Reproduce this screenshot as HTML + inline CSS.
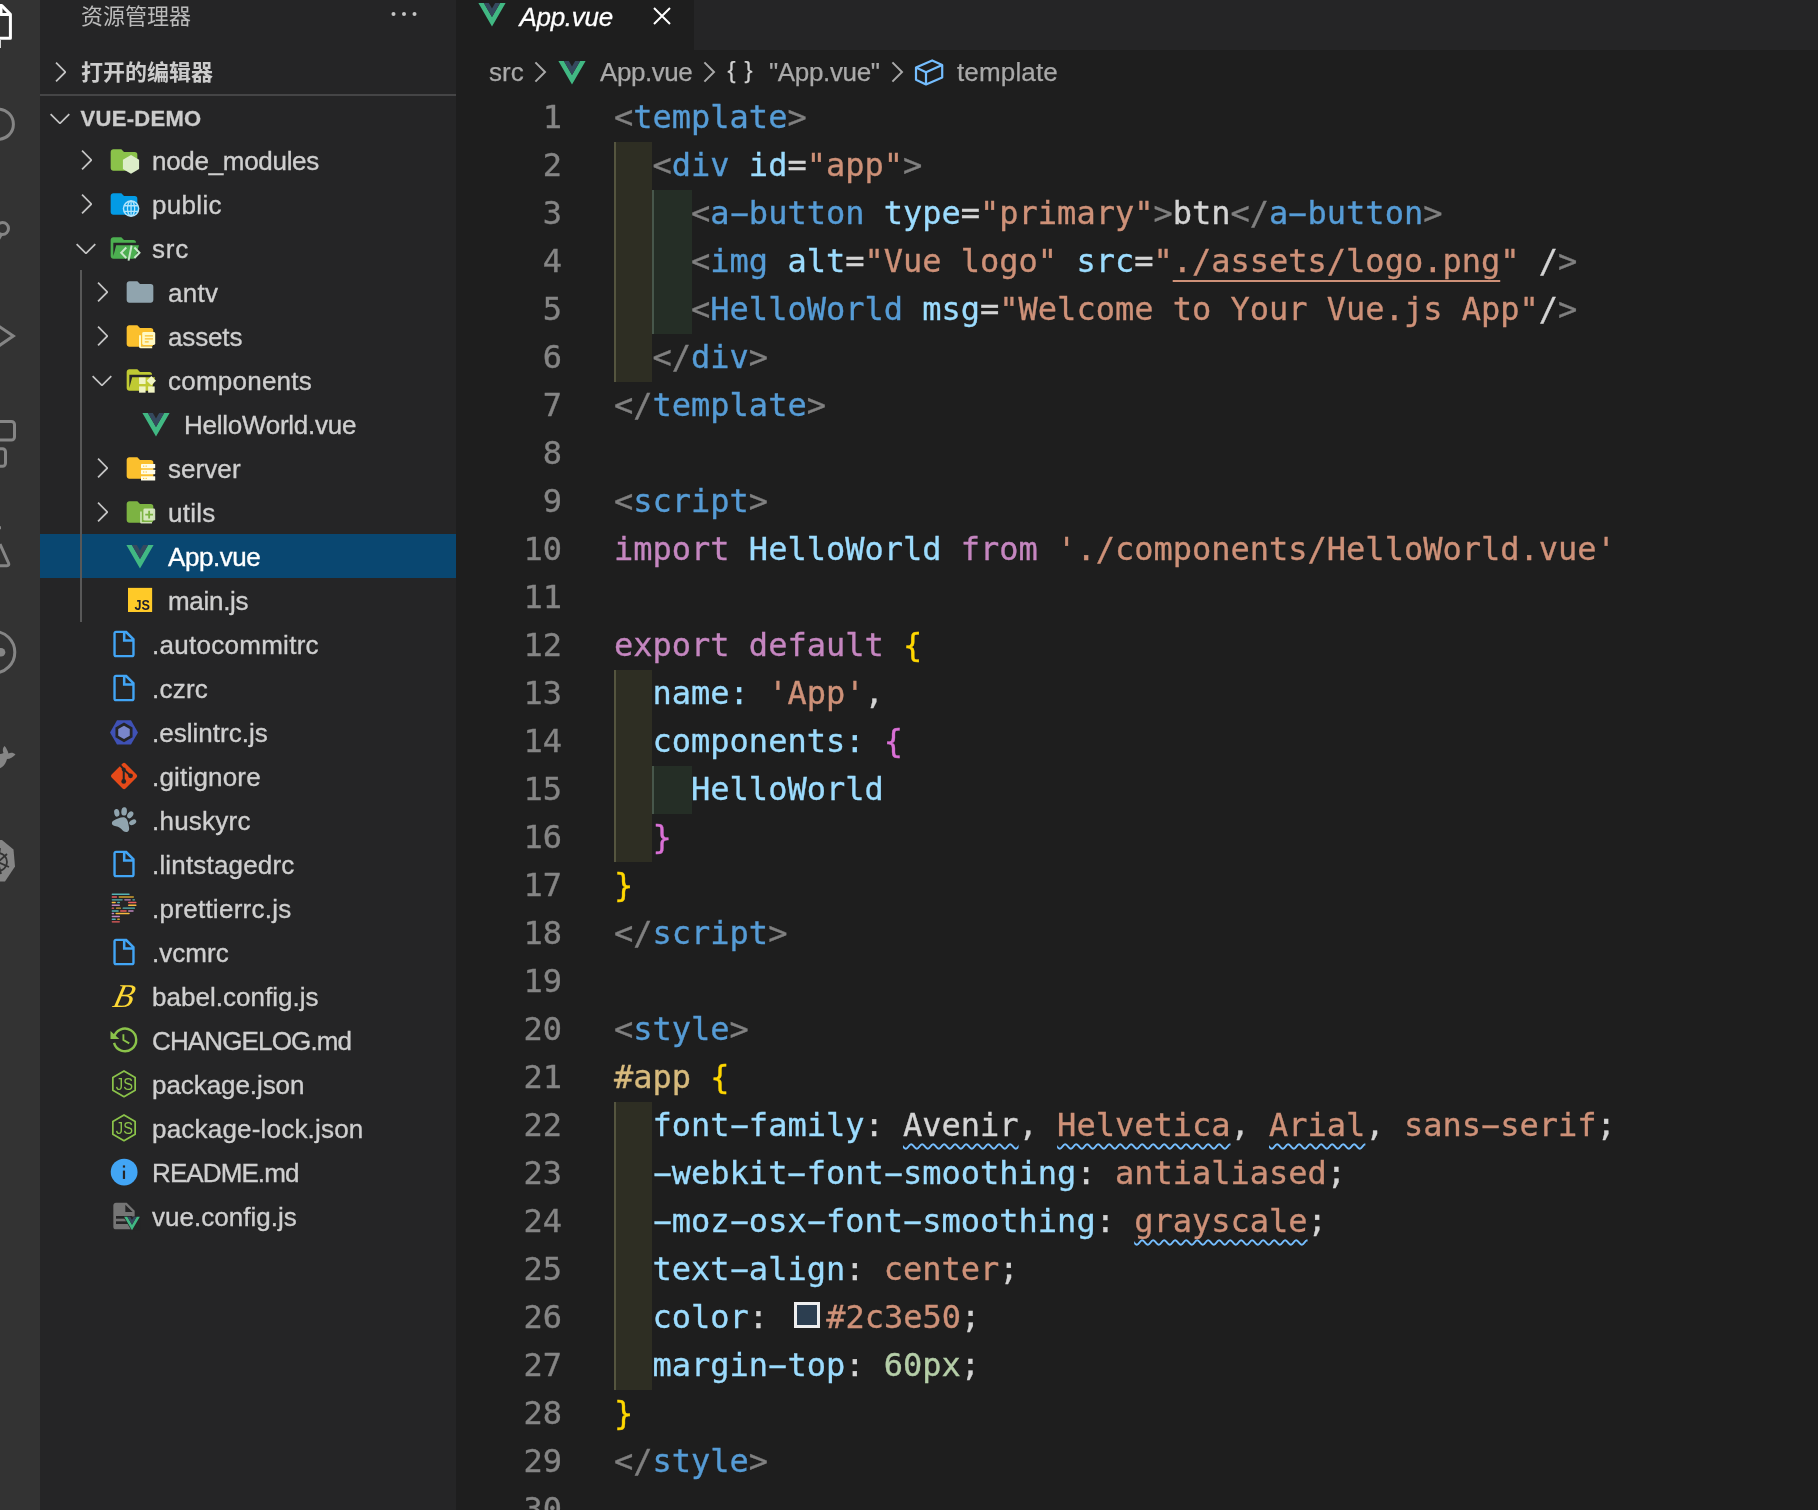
<!DOCTYPE html>
<html lang="zh-CN"><head><meta charset="utf-8"><title>App.vue - vue-demo</title>
<style>
*{box-sizing:border-box;margin:0;padding:0}
html,body{width:1818px;height:1510px;overflow:hidden;background:#1e1e1e}
body{position:relative;font-family:"Liberation Sans", "Noto Sans CJK SC", sans-serif;font-size:26px;color:#cccccc;-webkit-font-smoothing:antialiased}
#act{position:absolute;left:0;top:0;width:40px;height:1510px;background:#333333;overflow:hidden}
#side{position:absolute;left:40px;top:0;width:416px;height:1510px;background:#252526;overflow:hidden}
#ed{position:absolute;left:456px;top:0;width:1362px;height:1510px;background:#1e1e1e;overflow:hidden}
#tabs{position:absolute;left:0;top:0;width:1362px;height:50px;background:#252526}
#tab{position:absolute;left:0;top:0;width:238px;height:50px;background:#1e1e1e}
.abs{position:absolute}
.row{position:absolute;left:0;width:416px;height:44px}
.row.sel{background:#094771}
.row.sel .lb{color:#ffffff}
.row span{position:absolute;display:block}
.tw{top:6px;width:32px;height:32px}
.ic{top:6px;width:32px;height:32px}
.lb{top:1px;line-height:44px;white-space:pre;color:#cfcfcf;-webkit-text-stroke:0.35px}
svg{display:block;overflow:visible}
.ln{position:absolute;left:0;margin-top:-1px;-webkit-text-stroke:0.35px;width:106px;text-align:right;font-family:"DejaVu Sans Mono", "Liberation Mono", monospace;font-size:32px;line-height:48px;height:48px;color:#858585}
.cl{position:absolute;left:158px;margin-top:-1px;-webkit-text-stroke:0.35px;font-family:"DejaVu Sans Mono", "Liberation Mono", monospace;font-size:32px;line-height:48px;height:48px;white-space:pre;color:#d4d4d4}
.g{color:#808080}.t{color:#569cd6}.a{color:#9cdcfe}.s{color:#ce9178}.d{color:#d4d4d4}
.k{color:#c586c0}.y{color:#ffd700}.m{color:#da70d6}.c{color:#d7ba7d}.n{color:#b5cea8}
.u{text-decoration:underline;text-decoration-thickness:1.5px;text-underline-offset:8px;text-decoration-skip-ink:none}
.w{text-decoration:underline wavy #75beff;text-decoration-thickness:1.5px;text-underline-offset:7px;text-decoration-skip-ink:none}
.sw{display:inline-block;width:26px;height:26px;border:3px solid #eeeeee;background:#2c3e50;vertical-align:0px;margin-right:6.2px;margin-left:6.6px}
.r1{position:absolute;background:#2e2e23;border-left:2px solid #55553f}
.r2{position:absolute;background:#252e26;border-left:2px solid #47574b}
.h{display:inline-block;transform:scaleX(1.9) translateY(-0.5px)}
.gl{position:absolute;left:0;top:0;width:100%;height:100%;will-change:transform;background:transparent}
.bc{position:absolute;top:50px;height:44px;line-height:44px;color:#a9a9a9;white-space:pre;-webkit-text-stroke:0.25px}
</style></head>
<body>
<div id="act"><svg width="40" height="1510" viewBox="0 0 40 1510">
<g fill="none" stroke="#ffffff" stroke-width="3" stroke-linejoin="round">
<path d="M-6 5.600H1.800L10.400 14.400V38.200H-6"/>
<path d="M1 5.600V14.400H10.400"/>
</g>
<rect x="0" y="40" width="1" height="8" fill="#d8d8d8"/>
<g fill="none" stroke="#858585" stroke-width="3">
<circle cx="-1.700" cy="124.200" r="15.100"/>
<circle cx="2.500" cy="228.500" r="6"/>
<path d="M1.500 234l-4 7"/>
<path d="M-2 325.700l15.300 10.400-15.300 10.400" stroke-linejoin="miter"/>
<rect x="-10" y="421.500" width="24.500" height="18.500" rx="3"/>
<rect x="-12" y="448.800" width="17.500" height="17.500" rx="3"/>
<path d="M-1 527.800h2"/>
<path d="M0 544l8.500 19c.7 1.700 0 2.700-1.500 2.700h-10"/>
<circle cx="-6" cy="652.200" r="20.800"/>
</g>
<circle cx="1" cy="652.200" r="4.300" fill="#858585"/>
<path d="M-2 769c6-2 8-6 9-10 3 0 6-2 8.500-4.500-2-2-5-2-7-1-1-3-2-5.500-4-7.500-2 2-2 5-1 7-2 1-4 1-6 1z" fill="#858585"/>
<path d="M-8 840h10l11.500 9.500 1.500 17-10 15h-14z" fill="#858585"/>
<g stroke="#333333" stroke-width="1.800" fill="none"><path d="M-2 862l9-8M-2 862l11 5M-2 862l3 12M-2 862l2-14"/><circle cx="-2" cy="862" r="9"/></g>
</svg>
</div>
<div id="side">
<div class="gl">
<div class="abs" style="left:41px;top:-5px;line-height:44px;font-size:22px;color:#bbbbbb;white-space:pre">资源管理器</div>
<svg class="abs" style="left:350px;top:8px" width="30" height="12" viewBox="0 0 30 12"><g fill="#c5c5c5"><circle cx="3.500" cy="6" r="2"/><circle cx="14" cy="6" r="2"/><circle cx="24.500" cy="6" r="2"/></g></svg>
<span class="abs" style="left:4px;top:56px"><svg width="32" height="32" viewBox="0 0 16 16"><path d="M10.072 8.024L5.715 3.667l.618-.62L11 7.716v.618L6.333 13l-.618-.619 4.357-4.357z" fill="#c5c5c5"/></svg></span>
<div class="abs" style="left:41px;top:51px;line-height:44px;font-size:22px;font-weight:bold;color:#cccccc;white-space:pre">打开的编辑器</div>
<div class="abs" style="left:0;top:94px;width:416px;height:2px;background:#454546"></div>
<span class="abs" style="left:4px;top:102px"><svg width="32" height="32" viewBox="0 0 16 16"><path d="M7.976 10.072l4.357-4.357.62.618L8.284 11h-.618L3 6.333l.619-.618 4.357 4.357z" fill="#c5c5c5"/></svg></span>
<div class="abs" style="left:40.500px;top:97px;line-height:44px;font-size:22px;font-weight:bold;color:#cccccc;white-space:pre;letter-spacing:0.3px;-webkit-text-stroke:0.3px">VUE-DEMO</div>

<div class="row" style="top:138px">
<span class="tw" style="left:30px"><svg width="32" height="32" viewBox="0 0 16 16"><path d="M10.072 8.024L5.715 3.667l.618-.62L11 7.716v.618L6.333 13l-.618-.619 4.357-4.357z" fill="#c5c5c5"/></svg></span>
<span class="ic" style="left:68px"><svg width="32" height="32" viewBox="0 0 24 24"><path d="M10 4H4c-1.11 0-2 .89-2 2v12c0 1.1.9 2 2 2h16c1.1 0 2-.9 2-2V8a2 2 0 0 0-2-2h-8l-2-2z" fill="#8bc34a"/><path d="M17.250 8.300l6.060 3.500v7l-6.060 3.500-6.060-3.500v-7z" fill="#dcedc8"/></svg></span>
<span class="lb" style="left:112px;letter-spacing:-0.3px">node_modules</span>
</div>
<div class="row" style="top:182px">
<span class="tw" style="left:30px"><svg width="32" height="32" viewBox="0 0 16 16"><path d="M10.072 8.024L5.715 3.667l.618-.62L11 7.716v.618L6.333 13l-.618-.619 4.357-4.357z" fill="#c5c5c5"/></svg></span>
<span class="ic" style="left:68px"><svg width="32" height="32" viewBox="0 0 24 24"><path d="M10 4H4c-1.11 0-2 .89-2 2v12c0 1.1.9 2 2 2h16c1.1 0 2-.9 2-2V8a2 2 0 0 0-2-2h-8l-2-2z" fill="#039be5"/><circle cx="17.300" cy="15.400" r="5.700" fill="#039be5" stroke="#b3e5fc" stroke-width="1.100"/><g fill="none" stroke="#b3e5fc" stroke-width="1"><ellipse cx="17.300" cy="15.400" rx="2.700" ry="5.700"/><path d="M12.100 13.300h10.400M12.100 17.500h10.400M17.300 9.700v11.400"/></g></svg></span>
<span class="lb" style="left:112px;letter-spacing:0.32px">public</span>
</div>
<div class="row" style="top:226px">
<span class="tw" style="left:30px"><svg width="32" height="32" viewBox="0 0 16 16"><path d="M7.976 10.072l4.357-4.357.62.618L8.284 11h-.618L3 6.333l.619-.618 4.357 4.357z" fill="#c5c5c5"/></svg></span>
<span class="ic" style="left:68px"><svg width="32" height="32" viewBox="0 0 24 24"><path d="M19 20H4c-1.11 0-2-.9-2-2V6c0-1.11.89-2 2-2h6l2 2h7a2 2 0 0 1 2 2H4v10l2.14-8h17.07l-2.28 8.5c-.23.87-1.01 1.5-1.93 1.5z" fill="#4caf50"/><g fill="none" stroke="#c8e6c9" stroke-width="1.500"><path d="M13.700 11.600l-3.800 3.950 3.800 3.950M19.800 11.600l3.800 3.950-3.800 3.950M17.700 10.100l-2.300 11.400"/></g></svg></span>
<span class="lb" style="left:112px;letter-spacing:0.75px">src</span>
</div>
<div class="row" style="top:270px">
<span class="tw" style="left:46px"><svg width="32" height="32" viewBox="0 0 16 16"><path d="M10.072 8.024L5.715 3.667l.618-.62L11 7.716v.618L6.333 13l-.618-.619 4.357-4.357z" fill="#c5c5c5"/></svg></span>
<span class="ic" style="left:84px"><svg width="32" height="32" viewBox="0 0 24 24"><path d="M10 4H4c-1.11 0-2 .89-2 2v12c0 1.1.9 2 2 2h16c1.1 0 2-.9 2-2V8a2 2 0 0 0-2-2h-8l-2-2z" fill="#90a4ae"/></svg></span>
<span class="lb" style="left:128px;letter-spacing:0.3px">antv</span>
</div>
<div class="row" style="top:314px">
<span class="tw" style="left:46px"><svg width="32" height="32" viewBox="0 0 16 16"><path d="M10.072 8.024L5.715 3.667l.618-.62L11 7.716v.618L6.333 13l-.618-.619 4.357-4.357z" fill="#c5c5c5"/></svg></span>
<span class="ic" style="left:84px"><svg width="32" height="32" viewBox="0 0 24 24"><path d="M10 4H4c-1.11 0-2 .89-2 2v12c0 1.1.9 2 2 2h16c1.1 0 2-.9 2-2V8a2 2 0 0 0-2-2h-8l-2-2z" fill="#fbc02d"/><path d="M11.250 11.400h1.500v8.400h8.400v1.350h-8.700c-.7 0-1.200-.5-1.200-1.200z" fill="#fff9c4"/><rect x="13.650" y="9" width="9.750" height="9.800" rx="1.100" fill="#fff9c4"/><path d="M15.600 11.900h6.150M15.600 14.150h6.150M15.600 16.400h2.900" stroke="#fbc02d" stroke-width="1.050"/></svg></span>
<span class="lb" style="left:128px;letter-spacing:-0.14px">assets</span>
</div>
<div class="row" style="top:358px">
<span class="tw" style="left:46px"><svg width="32" height="32" viewBox="0 0 16 16"><path d="M7.976 10.072l4.357-4.357.62.618L8.284 11h-.618L3 6.333l.619-.618 4.357 4.357z" fill="#c5c5c5"/></svg></span>
<span class="ic" style="left:84px"><svg width="32" height="32" viewBox="0 0 24 24"><path d="M19 20H4c-1.11 0-2-.9-2-2V6c0-1.11.89-2 2-2h6l2 2h7a2 2 0 0 1 2 2H4v10l2.14-8h17.07l-2.28 8.5c-.23.87-1.01 1.5-1.93 1.5z" fill="#c0ca33"/><g fill="#f0f4c3"><rect x="11.300" y="10.100" width="4.900" height="4.900"/><rect x="11.300" y="16.800" width="4.900" height="4.700"/><rect x="18.100" y="16.800" width="4.900" height="4.700"/><path d="M20.500 9l3.500 3.500-3.500 3.500-3.500-3.500z"/></g></svg></span>
<span class="lb" style="left:128px;letter-spacing:0.23px">components</span>
</div>
<div class="row" style="top:402px">
<span class="ic" style="left:100px"><svg width="32" height="32" viewBox="0 0 24 24"><path d="M1.800 3.700L12 21.300 22.200 3.700h-4.100L12 14.250 5.900 3.700z" fill="#41b883"/><path d="M5.900 3.700L12 14.250 18.100 3.700h-3.740L12 7.800 9.640 3.700z" fill="#35495e"/></svg></span>
<span class="lb" style="left:144px;letter-spacing:-0.26px">HelloWorld.vue</span>
</div>
<div class="row" style="top:446px">
<span class="tw" style="left:46px"><svg width="32" height="32" viewBox="0 0 16 16"><path d="M10.072 8.024L5.715 3.667l.618-.62L11 7.716v.618L6.333 13l-.618-.619 4.357-4.357z" fill="#c5c5c5"/></svg></span>
<span class="ic" style="left:84px"><svg width="32" height="32" viewBox="0 0 24 24"><path d="M10 4H4c-1.11 0-2 .89-2 2v12c0 1.1.9 2 2 2h16c1.1 0 2-.9 2-2V8a2 2 0 0 0-2-2h-8l-2-2z" fill="#fbc02d"/><g fill="#fffde7"><rect x="12.750" y="9" width="10.650" height="3.150" rx=".3"/><rect x="12.750" y="13.350" width="10.650" height="3.250" rx=".3"/><rect x="12.750" y="18.100" width="10.650" height="3.350" rx=".3"/></g><g fill="#fbc02d"><rect x="14.300" y="10.200" width=".9" height=".8"/><rect x="16.200" y="10.200" width=".9" height=".8"/><rect x="14.300" y="14.600" width=".9" height=".8"/><rect x="16.200" y="14.600" width=".9" height=".8"/><rect x="14.300" y="19.400" width=".9" height=".8"/><rect x="16.200" y="19.400" width=".9" height=".8"/></g></svg></span>
<span class="lb" style="left:128px;letter-spacing:0.06px">server</span>
</div>
<div class="row" style="top:490px">
<span class="tw" style="left:46px"><svg width="32" height="32" viewBox="0 0 16 16"><path d="M10.072 8.024L5.715 3.667l.618-.62L11 7.716v.618L6.333 13l-.618-.619 4.357-4.357z" fill="#c5c5c5"/></svg></span>
<span class="ic" style="left:84px"><svg width="32" height="32" viewBox="0 0 24 24"><path d="M10 4H4c-1.11 0-2 .89-2 2v12c0 1.1.9 2 2 2h16c1.1 0 2-.9 2-2V8a2 2 0 0 0-2-2h-8l-2-2z" fill="#7cb342"/><path d="M12.100 11.700h1.250v7.800h7.650v1.200h-7.700c-.7 0-1.200-.5-1.200-1.200z" fill="#dcedc8" fill-opacity=".85"/><rect x="14.550" y="9.450" width="8.850" height="9" rx="1.100" fill="#dcedc8" fill-opacity=".92"/><path d="M18.850 11.050v5.800M15.950 13.950h5.800" stroke="#7cb342" stroke-width="1.350"/></svg></span>
<span class="lb" style="left:128px;letter-spacing:0.25px">utils</span>
</div>
<div class="row sel" style="top:534px">
<span class="ic" style="left:84px"><svg width="32" height="32" viewBox="0 0 24 24"><path d="M1.800 3.700L12 21.300 22.200 3.700h-4.100L12 14.250 5.900 3.700z" fill="#41b883"/><path d="M5.900 3.700L12 14.250 18.100 3.700h-3.740L12 7.800 9.640 3.700z" fill="#35495e"/></svg></span>
<span class="lb" style="left:128px;letter-spacing:-0.45px">App.vue</span>
</div>
<div class="row" style="top:578px">
<span class="ic" style="left:84px"><svg width="32" height="32" viewBox="0 0 24 24"><rect x="3" y="2.900" width="18.100" height="18.100" fill="#ffca28"/><text x="19.500" y="19.300" text-anchor="end" font-family="Liberation Sans, sans-serif" font-weight="bold" font-size="10.600" fill="#1a1b2e" textLength="11.600" lengthAdjust="spacingAndGlyphs">JS</text></svg></span>
<span class="lb" style="left:128px;letter-spacing:-0.3px">main.js</span>
</div>
<div class="row" style="top:622px">
<span class="ic" style="left:68px"><svg width="32" height="32" viewBox="0 0 24 24"><path fill-rule="evenodd" d="M14 2H6c-1.100 0-2 .9-2 2v16c0 1.100.9 2 2 2h12c1.100 0 2-.9 2-2V8l-6-6zM5.800 3.800h5.400v6.600h7v9.800H5.800zM13.100 3.900v4.600h4.600z" fill="#42a5f5"/></svg></span>
<span class="lb" style="left:112px;letter-spacing:0.28px">.autocommitrc</span>
</div>
<div class="row" style="top:666px">
<span class="ic" style="left:68px"><svg width="32" height="32" viewBox="0 0 24 24"><path fill-rule="evenodd" d="M14 2H6c-1.100 0-2 .9-2 2v16c0 1.100.9 2 2 2h12c1.100 0 2-.9 2-2V8l-6-6zM5.800 3.800h5.400v6.600h7v9.800H5.800zM13.100 3.900v4.600h4.600z" fill="#42a5f5"/></svg></span>
<span class="lb" style="left:112px;letter-spacing:0.22px">.czrc</span>
</div>
<div class="row" style="top:710px">
<span class="ic" style="left:68px"><svg width="32" height="32" viewBox="0 0 24 24"><polygon points="22.50,12.30 17.25,3.21 6.75,3.21 1.50,12.30 6.75,21.39 17.25,21.39" fill="#3f51b5"/><polygon points="12.00,4.90 5.59,8.60 5.59,16.00 12.00,19.70 18.41,16.00 18.41,8.60" fill="#252526"/><polygon points="12.00,7.30 7.67,9.80 7.67,14.80 12.00,17.30 16.33,14.80 16.33,9.80" fill="#7986cb"/></svg></span>
<span class="lb" style="left:112px;letter-spacing:0.01px">.eslintrc.js</span>
</div>
<div class="row" style="top:754px">
<span class="ic" style="left:68px"><svg width="32" height="32" viewBox="0 0 24 24"><rect x="4.650" y="4.550" width="14.800" height="14.800" rx="1.600" transform="rotate(45 12.050 11.950)" fill="#e64a19"/><g fill="#252526"><circle cx="11.800" cy="16.050" r="1.800"/><circle cx="11.800" cy="7.200" r="1.500"/><circle cx="16.900" cy="11.850" r="1.800"/></g><path d="M11.800 7.050v9M9.150 3.800l2.650 3.250 5.100 4.800" stroke="#252526" stroke-width="1.500" fill="none"/></svg></span>
<span class="lb" style="left:112px;letter-spacing:0.19px">.gitignore</span>
</div>
<div class="row" style="top:798px">
<span class="ic" style="left:68px"><svg width="32" height="32" viewBox="0 0 24 24"><g fill="#90a4ae"><ellipse cx="6.600" cy="6.600" rx="1.950" ry="2.900" transform="rotate(-10 6.600 6.600)"/><ellipse cx="12.100" cy="5.600" rx="2.100" ry="3.100" transform="rotate(5 12.100 5.600)"/><ellipse cx="16.700" cy="8.100" rx="1.950" ry="2.900" transform="rotate(35 16.700 8.100)"/><ellipse cx="18.500" cy="13.700" rx="1.800" ry="2.850" transform="rotate(62 18.500 13.700)"/><path d="M11.400 10c2.100 0 3.400 2 3.800 4.500.4 2.500 1.400 5 -.2 6.100-1.800 1.200-3.500-.1-5-1.800-1.500-1.600-3.500-2-5.500-2.500-1.900-.5-2.100-2.700-.5-3.700 2-1.200 5-2.600 7.400-2.600z"/></g></svg></span>
<span class="lb" style="left:112px;letter-spacing:0.23px">.huskyrc</span>
</div>
<div class="row" style="top:842px">
<span class="ic" style="left:68px"><svg width="32" height="32" viewBox="0 0 24 24"><path fill-rule="evenodd" d="M14 2H6c-1.100 0-2 .9-2 2v16c0 1.100.9 2 2 2h12c1.100 0 2-.9 2-2V8l-6-6zM5.800 3.800h5.400v6.600h7v9.800H5.800zM13.100 3.900v4.600h4.600z" fill="#42a5f5"/></svg></span>
<span class="lb" style="left:112px;letter-spacing:0.18px">.lintstagedrc</span>
</div>
<div class="row" style="top:886px">
<span class="ic" style="left:68px"><svg width="32" height="32" viewBox="0 0 24 24"><rect x="2.7" y="1.20" width="13.60" height="1.100" rx=".55" fill="#56b3b4"/><rect x="2.7" y="3.25" width="4.20" height="1.100" rx=".55" fill="#ea5e5e"/><rect x="7.9" y="3.25" width="11.60" height="1.100" rx=".55" fill="#d0a030"/><rect x="2.7" y="5.35" width="8.40" height="1.100" rx=".55" fill="#56b3b4"/><rect x="12.1" y="5.35" width="5.10" height="1.100" rx=".55" fill="#bf85bf"/><rect x="18.2" y="5.35" width="2.10" height="1.100" rx=".55" fill="#56b3b4"/><rect x="2.7" y="7.40" width="3.20" height="1.100" rx=".55" fill="#f7ba3e"/><rect x="6.8" y="7.40" width="2.20" height="1.100" rx=".55" fill="#56b3b4"/><rect x="15" y="7.40" width="6.40" height="1.100" rx=".55" fill="#ea5e5e"/><rect x="2.7" y="9.45" width="6.30" height="1.100" rx=".55" fill="#bf85bf"/><rect x="15" y="9.45" width="6.40" height="1.100" rx=".55" fill="#f7ba3e"/><rect x="2.7" y="11.55" width="1.95" height="1.100" rx=".55" fill="#ea5e5e"/><rect x="5.9" y="11.55" width="3.90" height="1.100" rx=".55" fill="#d0a030"/><rect x="10.9" y="11.55" width="9.40" height="1.100" rx=".55" fill="#56b3b4"/><rect x="2.7" y="13.65" width="5.40" height="1.100" rx=".55" fill="#56b3b4"/><rect x="9.0" y="13.65" width="5.10" height="1.100" rx=".55" fill="#ea5e5e"/><rect x="15" y="13.65" width="4.30" height="1.100" rx=".55" fill="#bf85bf"/><rect x="2.7" y="15.65" width="1.95" height="1.100" rx=".55" fill="#bf85bf"/><rect x="5.6" y="15.65" width="10.70" height="1.100" rx=".55" fill="#f7ba3e"/><rect x="2.7" y="17.75" width="6.30" height="1.100" rx=".55" fill="#bf85bf"/><rect x="2.7" y="19.85" width="3.20" height="1.100" rx=".55" fill="#56b3b4"/><rect x="6.8" y="19.85" width="2.20" height="1.100" rx=".55" fill="#d0a030"/><rect x="2.7" y="21.85" width="6.30" height="1.100" rx=".55" fill="#ea5e5e"/></svg></span>
<span class="lb" style="left:112px;letter-spacing:0.27px">.prettierrc.js</span>
</div>
<div class="row" style="top:930px">
<span class="ic" style="left:68px"><svg width="32" height="32" viewBox="0 0 24 24"><path fill-rule="evenodd" d="M14 2H6c-1.100 0-2 .9-2 2v16c0 1.100.9 2 2 2h12c1.100 0 2-.9 2-2V8l-6-6zM5.800 3.800h5.400v6.600h7v9.800H5.800zM13.100 3.900v4.600h4.600z" fill="#42a5f5"/></svg></span>
<span class="lb" style="left:112px;letter-spacing:0.02px">.vcmrc</span>
</div>
<div class="row" style="top:974px">
<span class="ic" style="left:68px"><svg width="32" height="32" viewBox="0 0 24 24"><text x="15.300" y="20.300" text-anchor="middle" font-family="Liberation Serif, DejaVu Serif, serif" font-style="italic" font-size="25" fill="#fdd835" transform="skewX(-14)" >B</text></svg></span>
<span class="lb" style="left:112px;letter-spacing:0.02px">babel.config.js</span>
</div>
<div class="row" style="top:1018px">
<span class="ic" style="left:68px"><svg width="32" height="32" viewBox="0 0 24 24"><path d="M4.380 10.480A8.450 8.450 0 1 1 4.540 14.140" fill="none" stroke="#8bc34a" stroke-width="1.800"/><path d="M1.870 5.180v6.120h6.650z" fill="#8bc34a"/><path d="M11.550 7.760v4.200l4.400 2.580" fill="none" stroke="#8bc34a" stroke-width="1.400"/></svg></span>
<span class="lb" style="left:112px;letter-spacing:-0.86px">CHANGELOG.md</span>
</div>
<div class="row" style="top:1062px">
<span class="ic" style="left:68px"><svg width="32" height="32" viewBox="0 0 24 24"><polygon points="12.00,2.25 3.64,7.08 3.64,16.73 12.00,21.55 20.36,16.73 20.36,7.08" fill="none" stroke="#8bc34a" stroke-width="1.300" stroke-linejoin="round"/><text x="18.700" y="16.500" text-anchor="end" font-family="Liberation Sans, sans-serif" font-size="12" fill="#8bc34a" textLength="12.800" lengthAdjust="spacingAndGlyphs">JS</text></svg></span>
<span class="lb" style="left:112px;letter-spacing:-0.07px">package.json</span>
</div>
<div class="row" style="top:1106px">
<span class="ic" style="left:68px"><svg width="32" height="32" viewBox="0 0 24 24"><polygon points="12.00,2.25 3.64,7.08 3.64,16.73 12.00,21.55 20.36,16.73 20.36,7.08" fill="none" stroke="#8bc34a" stroke-width="1.300" stroke-linejoin="round"/><text x="18.700" y="16.500" text-anchor="end" font-family="Liberation Sans, sans-serif" font-size="12" fill="#8bc34a" textLength="12.800" lengthAdjust="spacingAndGlyphs">JS</text></svg></span>
<span class="lb" style="left:112px;letter-spacing:0.2px">package-lock.json</span>
</div>
<div class="row" style="top:1150px">
<span class="ic" style="left:68px"><svg width="32" height="32" viewBox="0 0 24 24"><circle cx="12.100" cy="12.050" r="10.050" fill="#42a5f5"/><rect x="11.150" y="7.050" width="1.650" height="1.650" fill="#252526"/><rect x="11.150" y="10.950" width="1.650" height="6.250" fill="#252526"/></svg></span>
<span class="lb" style="left:112px;letter-spacing:-0.9px">README.md</span>
</div>
<div class="row" style="top:1194px">
<span class="ic" style="left:68px"><svg width="32" height="32" viewBox="0 0 24 24"><path fill-rule="evenodd" d="M13 9V3.500L18.500 9M6 2c-1.110 0-2 .89-2 2v16a2 2 0 0 0 2 2h12a2 2 0 0 0 2-2V8l-6-6H6z" fill="#757575"/><rect x="6" y="12" width="12" height="2" fill="#252526"/><rect x="6" y="16" width="12" height="2" fill="#252526"/><path d="M11.400 12.400H24.500V23H17.700z" fill="#252526"/><g transform="translate(11.060 10.410) scale(.578)"><path d="M1.800 3.700L12 21.300 22.200 3.700h-4.100L12 14.250 5.900 3.700z" fill="#41b883"/><path d="M5.900 3.700L12 14.250 18.100 3.700h-3.740L12 7.800 9.640 3.700z" fill="#35495e"/></g></svg></span>
<span class="lb" style="left:112px;letter-spacing:0.02px">vue.config.js</span>
</div>
</div>
<div class="abs" style="left:40.250px;top:270px;width:1.500px;height:352px;background:#585858"></div>
</div>
<div id="ed">
<div class="gl"><div id="tabs"><div id="tab">
<span class="abs" style="left:20px;top:-2px"><svg width="32" height="32" viewBox="0 0 24 24"><path d="M1.800 3.700L12 21.300 22.200 3.700h-4.100L12 14.250 5.900 3.700z" fill="#41b883"/><path d="M5.900 3.700L12 14.250 18.100 3.700h-3.740L12 7.800 9.640 3.700z" fill="#35495e"/></svg></span>
<div class="abs" style="left:63.5px;top:-5px;line-height:44px;letter-spacing:-0.3px;-webkit-text-stroke:0.3px;font-style:italic;color:#ffffff;white-space:pre">App.vue</div>
<svg class="abs" style="left:197px;top:7px" width="18" height="18" viewBox="0 0 18 18"><path d="M1 1l16 16M17 1L1 17" stroke="#ffffff" stroke-width="2" fill="none"/></svg>
</div></div>
<div class="bc" style="left:33px">src</div>
<svg class="abs" style="left:68px;top:56px" width="32" height="32" viewBox="0 0 16 16"><path d="M5.700 12.800l4.800-4.800L5.700 3.200" fill="none" stroke="#a9a9a9" stroke-width="1"/></svg>
<span class="abs" style="left:100px;top:56px"><svg width="32" height="32" viewBox="0 0 24 24"><path d="M1.800 3.700L12 21.300 22.200 3.700h-4.100L12 14.250 5.900 3.700z" fill="#41b883"/><path d="M5.900 3.700L12 14.250 18.100 3.700h-3.740L12 7.800 9.640 3.700z" fill="#35495e"/></svg></span>
<div class="bc" style="left:144px;letter-spacing:-0.45px">App.vue</div>
<svg class="abs" style="left:237px;top:56px" width="32" height="32" viewBox="0 0 16 16"><path d="M5.700 12.800l4.800-4.800L5.700 3.200" fill="none" stroke="#a9a9a9" stroke-width="1"/></svg>
<div class="bc" style="left:271.500px;top:48px;font-size:24px;color:#d0d0d0;letter-spacing:9px">{}</div>
<div class="bc" style="left:313px;letter-spacing:-0.36px">"App.vue"</div>
<svg class="abs" style="left:425px;top:56px" width="32" height="32" viewBox="0 0 16 16"><path d="M5.700 12.800l4.800-4.800L5.700 3.200" fill="none" stroke="#a9a9a9" stroke-width="1"/></svg>
<svg class="abs" style="left:457px;top:56px" width="32" height="32" viewBox="0 0 16 16"><path d="M1.500 5.800L9.600 2.200l5 2.300v6.200L6.500 14.200l-5-2.300zM1.500 5.800l5 2.300 8.100-3.600M6.500 8.100v6.100" fill="none" stroke="#75beff" stroke-width="1.100" stroke-linejoin="round"/></svg>
<div class="bc" style="left:501px;letter-spacing:0.15px">template</div>
</div>
<div class="abs" style="left:-456px;top:0"><div class="r1" style="left:614px;top:142px;width:38px;height:240px"></div>
<div class="r2" style="left:652px;top:190px;width:40px;height:144px"></div>
<div class="r1" style="left:614px;top:670px;width:38px;height:192px"></div>
<div class="r2" style="left:652px;top:766px;width:40px;height:48px"></div>
<div class="r1" style="left:614px;top:1102px;width:38px;height:288px"></div></div>
<div class="gl"><div class="ln" style="top:94px">1</div>
<div class="cl" style="top:94px"><span class="g">&lt;</span><span class="t">template</span><span class="g">&gt;</span></div>
<div class="ln" style="top:142px">2</div>
<div class="cl" style="top:142px">  <span class="g">&lt;</span><span class="t">div</span> <span class="a">id</span><span class="d">=</span><span class="s">"app"</span><span class="g">&gt;</span></div>
<div class="ln" style="top:190px">3</div>
<div class="cl" style="top:190px">    <span class="g">&lt;</span><span class="t">a<span class="h">-</span>button</span> <span class="a">type</span><span class="d">=</span><span class="s">"primary"</span><span class="g">&gt;</span><span class="d">btn</span><span class="g">&lt;/</span><span class="t">a<span class="h">-</span>button</span><span class="g">&gt;</span></div>
<div class="ln" style="top:238px">4</div>
<div class="cl" style="top:238px">    <span class="g">&lt;</span><span class="t">img</span> <span class="a">alt</span><span class="d">=</span><span class="s">"Vue logo"</span> <span class="a">src</span><span class="d">=</span><span class="s">"</span><span class="s u">./assets/logo.png</span><span class="s">"</span><span class="d"> /</span><span class="g">&gt;</span></div>
<div class="ln" style="top:286px">5</div>
<div class="cl" style="top:286px">    <span class="g">&lt;</span><span class="t">HelloWorld</span> <span class="a">msg</span><span class="d">=</span><span class="s">"Welcome to Your Vue.js App"</span><span class="d">/</span><span class="g">&gt;</span></div>
<div class="ln" style="top:334px">6</div>
<div class="cl" style="top:334px">  <span class="g">&lt;/</span><span class="t">div</span><span class="g">&gt;</span></div>
<div class="ln" style="top:382px">7</div>
<div class="cl" style="top:382px"><span class="g">&lt;/</span><span class="t">template</span><span class="g">&gt;</span></div>
<div class="ln" style="top:430px">8</div>
<div class="ln" style="top:478px">9</div>
<div class="cl" style="top:478px"><span class="g">&lt;</span><span class="t">script</span><span class="g">&gt;</span></div>
<div class="ln" style="top:526px">10</div>
<div class="cl" style="top:526px"><span class="k">import</span> <span class="a">HelloWorld</span> <span class="k">from</span> <span class="s">'./components/HelloWorld.vue'</span></div>
<div class="ln" style="top:574px">11</div>
<div class="ln" style="top:622px">12</div>
<div class="cl" style="top:622px"><span class="k">export</span> <span class="k">default</span> <span class="y">{</span></div>
<div class="ln" style="top:670px">13</div>
<div class="cl" style="top:670px">  <span class="a">name</span><span class="a">:</span> <span class="s">'App'</span><span class="d">,</span></div>
<div class="ln" style="top:718px">14</div>
<div class="cl" style="top:718px">  <span class="a">components</span><span class="a">:</span> <span class="m">{</span></div>
<div class="ln" style="top:766px">15</div>
<div class="cl" style="top:766px">    <span class="a">HelloWorld</span></div>
<div class="ln" style="top:814px">16</div>
<div class="cl" style="top:814px">  <span class="m">}</span></div>
<div class="ln" style="top:862px">17</div>
<div class="cl" style="top:862px"><span class="y">}</span></div>
<div class="ln" style="top:910px">18</div>
<div class="cl" style="top:910px"><span class="g">&lt;/</span><span class="t">script</span><span class="g">&gt;</span></div>
<div class="ln" style="top:958px">19</div>
<div class="ln" style="top:1006px">20</div>
<div class="cl" style="top:1006px"><span class="g">&lt;</span><span class="t">style</span><span class="g">&gt;</span></div>
<div class="ln" style="top:1054px">21</div>
<div class="cl" style="top:1054px"><span class="c">#app</span> <span class="y">{</span></div>
<div class="ln" style="top:1102px">22</div>
<div class="cl" style="top:1102px">  <span class="a">font<span class="h">-</span>family</span><span class="d">:</span> <span class="d w">Avenir</span><span class="d">,</span> <span class="s w">Helvetica</span><span class="d">,</span> <span class="s w">Arial</span><span class="d">,</span> <span class="s">sans<span class="h">-</span>serif</span><span class="d">;</span></div>
<div class="ln" style="top:1150px">23</div>
<div class="cl" style="top:1150px">  <span class="a"><span class="h">-</span>webkit<span class="h">-</span>font<span class="h">-</span>smoothing</span><span class="d">:</span> <span class="s">antialiased</span><span class="d">;</span></div>
<div class="ln" style="top:1198px">24</div>
<div class="cl" style="top:1198px">  <span class="a"><span class="h">-</span>moz<span class="h">-</span>osx<span class="h">-</span>font<span class="h">-</span>smoothing</span><span class="d">:</span> <span class="s w">grayscale</span><span class="d">;</span></div>
<div class="ln" style="top:1246px">25</div>
<div class="cl" style="top:1246px">  <span class="a">text<span class="h">-</span>align</span><span class="d">:</span> <span class="s">center</span><span class="d">;</span></div>
<div class="ln" style="top:1294px">26</div>
<div class="cl" style="top:1294px">  <span class="a">color</span><span class="d">:</span> <span class="sw"></span><span class="s">#2c3e50</span><span class="d">;</span></div>
<div class="ln" style="top:1342px">27</div>
<div class="cl" style="top:1342px">  <span class="a">margin<span class="h">-</span>top</span><span class="d">:</span> <span class="n">60px</span><span class="d">;</span></div>
<div class="ln" style="top:1390px">28</div>
<div class="cl" style="top:1390px"><span class="y">}</span></div>
<div class="ln" style="top:1438px">29</div>
<div class="cl" style="top:1438px"><span class="g">&lt;/</span><span class="t">style</span><span class="g">&gt;</span></div>
<div class="ln" style="top:1486px">30</div></div>
</div>
</body></html>
